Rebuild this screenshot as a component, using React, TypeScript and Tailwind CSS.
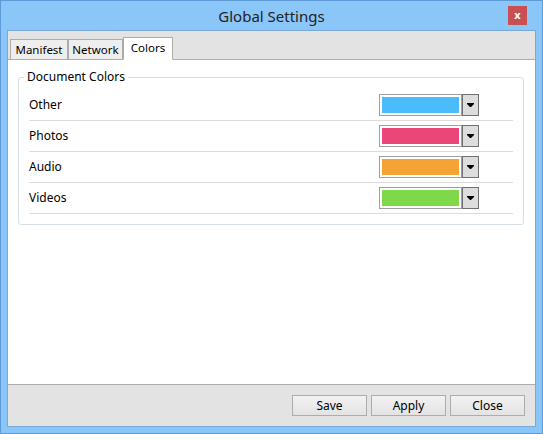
import React from 'react';

const font = { fontFamily: '"Noto Sans", "Segoe UI", sans-serif' };

const colors = [
    { name: 'Other', color: 'bg-[#4bbcfa]' },
    { name: 'Photos', color: 'bg-[#ea4678]' },
    { name: 'Audio', color: 'bg-[#f4a334]' },
    { name: 'Videos', color: 'bg-[#7ed84a]' },
];

function ColorCombo({ color }: { color: string }) {
    return (
        <div className="flex h-[22px]">
            <div className="w-[83px] border border-[#a0a0a0] bg-white p-[2px]">
                <div className={`h-full w-full ${color}`} />
            </div>
            <div className="w-[17px] border border-[#707070] bg-[#dddddd] flex items-center justify-center">
                <svg width="7" height="5" viewBox="0 0 7 5">
                    <polygon points="0,0 7,0 7,1 4,4 3,4 0,1" fill="#000" />
                </svg>
            </div>
        </div>
    );
}

function Tab({ label, active, width }: { label: string; active?: boolean; width: string }) {
    return (
        <div
            className={
                active
                    ? `${width} h-[23px] -mb-px bg-white border border-[#acacac] border-b-white flex items-start justify-center pt-[4px] relative z-10`
                    : `${width} h-[20px] bg-[#eeeeee] border border-[#acacac] border-b-0 flex items-center justify-center`
            }
        >
            <span className="text-[11.5px] text-black leading-none">{label}</span>
        </div>
    );
}

export default function App() {
    return (
        <div style={font} className="w-[543px] h-[434px] bg-[#8bc6f9] border border-[#5e9ad6] flex flex-col px-[6px] pb-[6px]">
            <div className="h-[29px] flex items-start">
                <div className="w-[28px]" />
                <div className="flex-1 text-center text-[15px] text-[#222] pt-[4px]">Global Settings</div>
                <div className="w-[28px] pt-[5px] flex">
                    <div className="w-[19px] h-[19px] bg-[#c75050] flex items-center justify-center text-white text-[11px] font-bold leading-none pb-[2px]">
                        x
                    </div>
                </div>
            </div>

            <div className="flex-1 border border-[#7aa8d8] bg-[#e3e3e3] flex flex-col">
                <div className="h-[28px] flex items-end pl-[2px]">
                    <Tab label="Manifest" width="w-[58px]" />
                    <Tab label="Network" width="w-[55px]" />
                    <Tab label="Colors" width="w-[50px]" active />
                </div>

                <div className="h-[326px] bg-white border-y border-[#acacac] pt-[17px] pl-[10px] pr-[11px]">
                    <div className="relative border border-[#d5dfe5] rounded-[3px] pt-[12px] pb-[10px] px-[10px]">
                        <span className="absolute -top-[9px] left-[5px] bg-white px-[3px] text-[12px] text-black leading-[16px]">
                            Document Colors
                        </span>
                        {colors.map((c) => (
                            <div key={c.name} className="h-[31px] border-b border-[#dcdcdc] flex items-center">
                                <span className="text-[12px] text-black">{c.name}</span>
                                <div className="ml-auto mr-[34px]">
                                    <ColorCombo color={c.color} />
                                </div>
                            </div>
                        ))}
                    </div>
                </div>

                <div className="flex-1 flex items-center justify-end gap-[4px] pr-[10px]">
                    {['Save', 'Apply', 'Close'].map((b) => (
                        <button
                            key={b}
                            className="w-[75px] h-[21px] border border-[#acacac] bg-gradient-to-b from-[#f2f2f2] to-[#e3e3e3] text-[12px] text-black leading-none"
                        >
                            {b}
                        </button>
                    ))}
                </div>
            </div>
        </div>
    );
}
